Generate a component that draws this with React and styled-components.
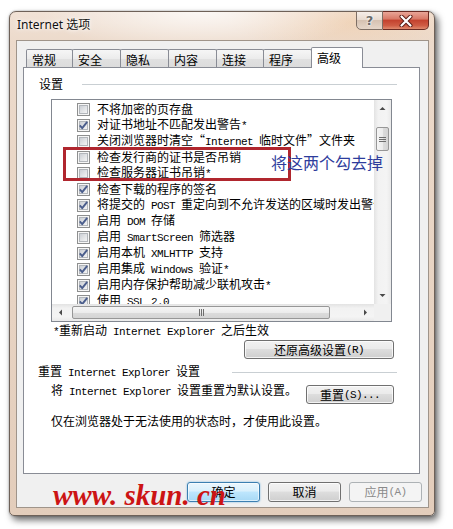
import React from 'react';
import styled, { createGlobalStyle, css } from 'styled-components';

const Global = createGlobalStyle`
  html, body { margin: 0; padding: 0; background: #fff; }
  body {
    font-family: "Noto Sans CJK SC", sans-serif;
    font-size: 12px;
    color: #000;
  }
  * { box-sizing: border-box; }
`;

const Page = styled.div`
  width: 453px;
  height: 529px;
  padding: 11px 0 0 9px;
  overflow: hidden;
  background: #fff;
`;

const Window = styled.div`
  position: relative;
  width: 426px;
  height: 505px;
  display: flex;
  flex-direction: column;
  border: 1px solid #6e6158;
  border-radius: 7px 7px 5px 5px;
  background:
    radial-gradient(ellipse 160px 40px at 45% 0%, rgba(255, 255, 255, 0.75), rgba(255, 255, 255, 0) 100%),
    radial-gradient(ellipse 120px 30px at 80% 10px, rgba(240, 200, 160, 0.5), rgba(255, 255, 255, 0) 100%),
    linear-gradient(180deg, #f1e2d6 0px, #ecdacb 30px, #e7d3c2 60%, #e3cdbb 100%);
  box-shadow: 3px 4px 7px rgba(0, 0, 0, 0.6), 0 0 2px rgba(0, 0, 0, 0.35);
`;

const TitleBar = styled.div`
  height: 28px;
  display: flex;
  align-items: flex-start;
  padding-left: 7px;
`;

const Title = styled.div`
  margin-top: 5px;
  line-height: 16px;
  font-family: "Noto Sans", "Noto Sans CJK SC", sans-serif;
  font-size: 12px;
  color: #111;
  text-shadow: 0 0 6px #fff, 0 0 3px #fff;
`;

const Captions = styled.div`
  margin-left: auto;
  margin-right: 5px;
  margin-top: -1px;
  display: flex;
`;

const CaptionButton = styled.div`
  height: 19px;
  display: flex;
  align-items: center;
  justify-content: center;
  ${(p) =>
    p.$close
      ? css`
          width: 46px;
          border: 1px solid #6a2a22;
          border-left: none;
          border-radius: 0 0 5px 0;
          background: linear-gradient(180deg, #e9a597 0%, #d97a68 40%, #c4432f 50%, #cf5c44 80%, #e08a6e 100%);
        `
      : css`
          width: 27px;
          border: 1px solid #7d6e64;
          border-radius: 0 0 0 5px;
          background: linear-gradient(180deg, #f6eee8 0%, #e8dbd0 45%, #d6c2b2 50%, #e6d6c9 100%);
        `}
`;

const HelpGlyph = styled.span`
  font-family: "DejaVu Sans", sans-serif;
  font-weight: bold;
  font-size: 13px;
  line-height: 13px;
  color: #6a6a6a;
  text-shadow: 0 0 2px #fff, 0 0 2px #fff;
`;

const Client = styled.div`
  flex: 1;
  margin: 0 5px 7px 6px;
  border: 1px solid #9f948a;
  background: #f0f0f0;
  display: flex;
  flex-direction: column;
`;

const TabStrip = styled.div`
  position: relative;
  z-index: 1;
  height: 26px;
  display: flex;
  align-items: flex-end;
  padding-left: 9px;
`;

const Tab = styled.div`
  margin-right: -1px;
  border: 1px solid #898c95;
  border-bottom: none;
  border-radius: 2px 2px 0 0;
  padding: 1px 0 0 5px;
  line-height: 17px;
  white-space: nowrap;
  width: ${(p) => p.$w}px;
  ${(p) =>
    p.$active
      ? css`
          height: 21px;
          margin-bottom: -1px;
          background: #fff;
        `
      : css`
          height: 18px;
          background: linear-gradient(180deg, #f6f6f6 0%, #ececec 50%, #e1e1e1 51%, #dcdcdc 100%);
        `}
`;

const Panel = styled.div`
  height: 407px;
  margin: 0 8px 0 6px;
  border: 1px solid #898c95;
  background: #fff;
  display: flex;
  flex-direction: column;
`;

const GroupHead = styled.div`
  height: 16px;
  display: flex;
  align-items: center;
  margin: ${(p) => p.$mt}px 22px 0 ${(p) => p.$ml}px;
  line-height: 16px;
  white-space: nowrap;
`;

const GroupLabel = styled.span`
  white-space: pre;
`;

const GroupLine = styled.div`
  flex: 1;
  height: 1px;
  margin-left: ${(p) => p.$gap}px;
  background: #c9cfd3;
`;

const ListBox = styled.div`
  width: 341px;
  height: 223px;
  margin: 7px 0 0 27px;
  border: 1px solid #828790;
  display: grid;
  grid-template-columns: 1fr 17px;
  grid-template-rows: 1fr 17px;
  background: #fff;
`;

const Items = styled.div`
  overflow: hidden;
  padding-top: 1px;
`;

const Item = styled.div`
  height: 16px;
  display: flex;
  align-items: center;
  gap: 7px;
  padding-left: 25px;
  white-space: nowrap;
  line-height: 16px;
`;

const Box = styled.svg`
  flex-shrink: 0;
  display: block;
`;

const VScroll = styled.div`
  display: flex;
  flex-direction: column;
  background: linear-gradient(90deg, #e3e3e3 0%, #f2f2f2 25%, #f4f4f4 75%, #e9e9e9 100%);
`;

const HScroll = styled.div`
  display: flex;
  background: linear-gradient(180deg, #e3e3e3 0%, #f2f2f2 25%, #f4f4f4 75%, #e9e9e9 100%);
`;

const Arrow = styled.div`
  width: 17px;
  height: 17px;
  flex-shrink: 0;
  display: flex;
  align-items: center;
  justify-content: center;
`;

const VTrack = styled.div`
  flex: 1;
`;

const HTrack = styled.div`
  flex: 1;
  display: flex;
  align-items: center;
`;

const Thumb = styled.div`
  border: 1px solid #979797;
  border-radius: 2px;
  display: flex;
  align-items: center;
  justify-content: center;
  ${(p) =>
    p.$vertical
      ? css`
          width: 13px;
          height: 24px;
          margin: 10px 0 0 2px;
          background: linear-gradient(90deg, #f5f5f5 0%, #ececec 50%, #dcdcdc 51%, #d4d4d4 100%);
        `
      : css`
          height: 13px;
          width: 258px;
          margin-left: 3px;
          background: linear-gradient(180deg, #f5f5f5 0%, #ececec 50%, #dcdcdc 51%, #d4d4d4 100%);
        `}
`;

const Corner = styled.div`
  background: #f0f0f0;
`;

const Note = styled.div`
  margin-left: 29px;
  line-height: 16px;
  height: 16px;
  white-space: nowrap;
`;

const RightRow = styled.div`
  display: flex;
  justify-content: flex-end;
  margin: 2px 25px 0 0;
`;

const Button = styled.div`
  width: ${(p) => p.$w}px;
  height: ${(p) => p.$h || 19}px;
  margin-top: ${(p) => p.$mt || 0}px;
  flex-shrink: 0;
  border: 1px solid #707070;
  border-radius: 3px;
  display: flex;
  align-items: center;
  justify-content: center;
  white-space: pre;
  line-height: 14px;
  background: linear-gradient(180deg, #f2f2f2 0%, #ebebeb 45%, #dddddd 50%, #cfcfcf 100%);
  box-shadow: inset 0 0 0 1px rgba(255, 255, 255, 0.75);
  ${(p) =>
    p.$default &&
    css`
      border-color: #3c7fb1;
      background: linear-gradient(180deg, #eaf6fd 0%, #d9f0fc 45%, #bee6fd 50%, #a7d9f5 100%);
      box-shadow: inset 0 0 0 1px rgba(255, 255, 255, 0.6), 0 0 2px #6fb4e0;
    `}
  ${(p) =>
    p.$disabled &&
    css`
      border-color: #adb2b5;
      background: #f4f4f4;
      color: #8a8a8a;
      box-shadow: none;
    `}
`;

const ResetRow = styled.div`
  display: flex;
  justify-content: space-between;
  align-items: flex-start;
  margin: 2px 25px 0 27px;
`;

const Text = styled.div`
  line-height: 16px;
  white-space: nowrap;
`;

const Hint = styled.div`
  margin: 9px 0 0 27px;
  line-height: 16px;
  white-space: nowrap;
`;

const Footer = styled.div`
  display: flex;
  justify-content: flex-end;
  gap: 8px;
  padding: 8px 6px 0 0;
`;

const L = styled.span`
  font-family: "Liberation Mono", monospace;
  font-size: 11px;
  letter-spacing: -0.6px;
`;

const RedBox = styled.div`
  position: absolute;
  left: 53px;
  top: 135px;
  width: 228px;
  height: 34px;
  border: 3px solid #b0262e;
  pointer-events: none;
`;

const Annotation = styled.div`
  position: absolute;
  left: 261px;
  top: 140px;
  font-size: 16px;
  line-height: 20px;
  color: #2d3c9c;
  white-space: nowrap;
`;

const Watermark = styled.div`
  position: absolute;
  left: 43px;
  top: 468px;
  font-family: "Liberation Serif", serif;
  font-weight: bold;
  font-style: italic;
  font-size: 29px;
  line-height: 30px;
  color: #cc1414;
  white-space: nowrap;
  pointer-events: none;
`;

const mix = (s) =>
  s.split(/([ -~]+)/).filter(Boolean).map((p, i) =>
    /^[ -~]+$/.test(p) ? <L key={i}>{p}</L> : <React.Fragment key={i}>{p}</React.Fragment>
  );

const CheckBox = ({ checked }) => (
  <Box width="13" height="13" viewBox="0 0 13 13">
    <defs>
      <linearGradient id="cbin" x1="0" y1="0" x2="1" y2="1">
        <stop offset="0" stopColor="#c9cdd3" />
        <stop offset="1" stopColor="#f7f7f7" />
      </linearGradient>
    </defs>
    <rect x="0.5" y="0.5" width="12" height="12" fill="#f6f6f6" stroke="#8e8f8f" />
    <rect x="2.5" y="2.5" width="8" height="8" fill="url(#cbin)" stroke="#b2b6bb" />
    {checked && (
      <path d="M2.8 6.4 L5.2 9.2 L10.2 2.8" fill="none" stroke="#4a5d8c" strokeWidth="1.9" strokeLinejoin="round" />
    )}
  </Box>
);

const Tri = ({ dir }) => {
  const pts = {
    up: '0.5,4 3.5,1 6.5,4',
    down: '0.5,1 3.5,4 6.5,1',
    left: '4,0.5 1,3.5 4,6.5',
    right: '1,0.5 4,3.5 1,6.5',
  }[dir];
  const vert = dir === 'up' || dir === 'down';
  return (
    <svg width={vert ? 7 : 5} height={vert ? 5 : 7} viewBox={vert ? '0 0 7 5' : '0 0 5 7'}>
      <polygon points={pts} fill="#4a4a4a" />
    </svg>
  );
};

const Grip = ({ vertical }) =>
  vertical ? (
    <svg width="7" height="7" viewBox="0 0 7 7">
      <path d="M0 1.5H7M0 3.5H7M0 5.5H7" stroke="#6e6e6e" strokeWidth="1" />
    </svg>
  ) : (
    <svg width="7" height="7" viewBox="0 0 7 7">
      <path d="M1.5 0V7M3.5 0V7M5.5 0V7" stroke="#6e6e6e" strokeWidth="1" />
    </svg>
  );

const tabs = [
  ['常规', 47],
  ['安全', 49],
  ['隐私', 49],
  ['内容', 49],
  ['连接', 48],
  ['程序', 49],
];

const items = [
  ['不将加密的页存盘', false],
  ['对证书地址不匹配发出警告*', true],
  ['关闭浏览器时清空“Internet 临时文件”文件夹', false],
  ['检查发行商的证书是否吊销', false],
  ['检查服务器证书吊销*', false],
  ['检查下载的程序的签名', true],
  ['将提交的 POST 重定向到不允许发送的区域时发出警告', true],
  ['启用 DOM 存储', true],
  ['启用 SmartScreen 筛选器', false],
  ['启用本机 XMLHTTP 支持', true],
  ['启用集成 Windows 验证*', true],
  ['启用内存保护帮助减少联机攻击*', true],
  ['使用 SSL 2.0', true],
];

export default function App() {
  return (
    <>
      <Global />
      <Page>
        <Window>
          <TitleBar>
            <Title>Internet 选项</Title>
            <Captions>
              <CaptionButton>
                <HelpGlyph>?</HelpGlyph>
              </CaptionButton>
              <CaptionButton $close>
                <svg width="14" height="12" viewBox="0 0 14 12">
                  <path d="M2.5 1.5 L11.5 10.5 M11.5 1.5 L2.5 10.5" stroke="#5a1c14" strokeWidth="4" strokeLinecap="round" />
                  <path d="M2.5 1.5 L11.5 10.5 M11.5 1.5 L2.5 10.5" stroke="#fff" strokeWidth="2.2" strokeLinecap="round" />
                </svg>
              </CaptionButton>
            </Captions>
          </TitleBar>
          <Client>
            <TabStrip>
              {tabs.map(([t, w]) => (
                <Tab key={t} $w={w}>
                  {t}
                </Tab>
              ))}
              <Tab $active $w={52}>
                高级
              </Tab>
            </TabStrip>
            <Panel>
              <GroupHead $mt={8} $ml={15}>
                <GroupLabel>设置</GroupLabel>
                <GroupLine $gap={19} />
              </GroupHead>
              <ListBox>
                <Items>
                  {items.map(([label, checked]) => (
                    <Item key={label}>
                      <CheckBox checked={checked} />
                      <span>{mix(label)}</span>
                    </Item>
                  ))}
                </Items>
                <VScroll>
                  <Arrow>
                    <Tri dir="up" />
                  </Arrow>
                  <VTrack>
                    <Thumb $vertical>
                      <Grip vertical />
                    </Thumb>
                  </VTrack>
                  <Arrow>
                    <Tri dir="down" />
                  </Arrow>
                </VScroll>
                <HScroll>
                  <Arrow>
                    <Tri dir="left" />
                  </Arrow>
                  <HTrack>
                    <Thumb>
                      <Grip />
                    </Thumb>
                  </HTrack>
                  <Arrow>
                    <Tri dir="right" />
                  </Arrow>
                </HScroll>
                <Corner />
              </ListBox>
              <Note>{mix('*重新启动 Internet Explorer 之后生效')}</Note>
              <RightRow>
                <Button $w={150}>{mix('还原高级设置(R)')}</Button>
              </RightRow>
              <GroupHead $mt={5} $ml={14}>
                <GroupLabel>{mix('重置 Internet Explorer 设置')}</GroupLabel>
                <GroupLine $gap={32} />
              </GroupHead>
              <ResetRow>
                <Text>{mix('将 Internet Explorer 设置重置为默认设置。')}</Text>
                <Button $w={88} $mt={3}>
                  {mix('重置(S)...')}
                </Button>
              </ResetRow>
              <Hint>仅在浏览器处于无法使用的状态时，才使用此设置。</Hint>
            </Panel>
            <Footer>
              <Button $w={73} $h={20} $default>
                确定
              </Button>
              <Button $w={73} $h={20}>
                取消
              </Button>
              <Button $w={73} $h={20} $disabled>
                {mix('应用(A)')}
              </Button>
            </Footer>
          </Client>
          <RedBox />
          <Annotation>将这两个勾去掉</Annotation>
          <Watermark>www. skun. cn</Watermark>
        </Window>
      </Page>
    </>
  );
}
